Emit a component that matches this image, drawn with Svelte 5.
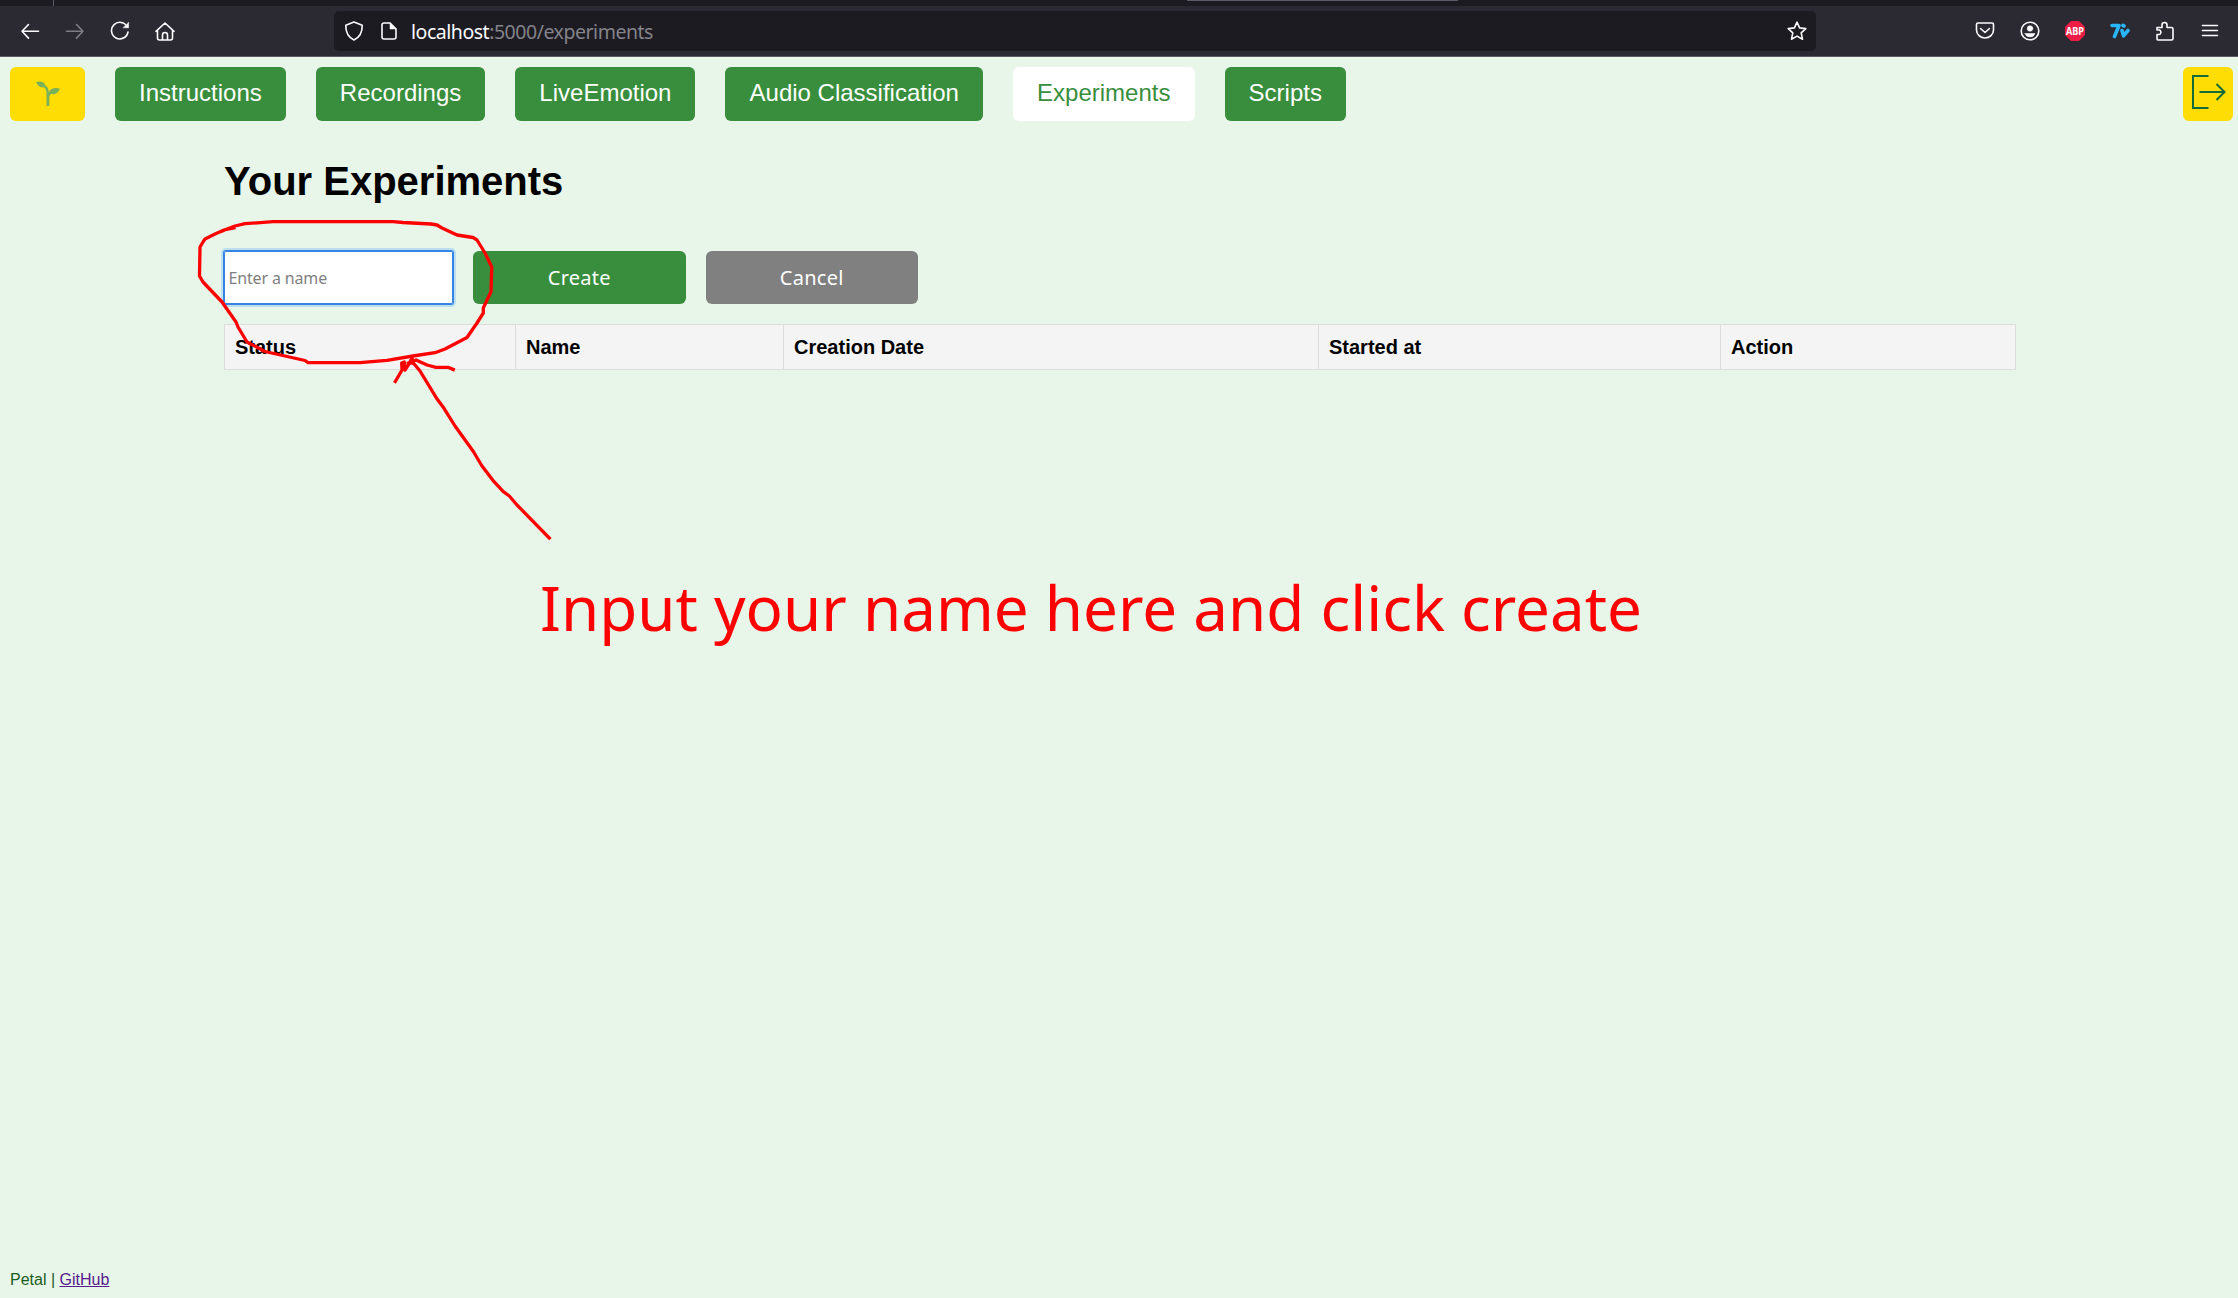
<script>
  const nav = ['Instructions', 'Recordings', 'LiveEmotion', 'Audio Classification', 'Experiments', 'Scripts'];
  const columns = ['Status', 'Name', 'Creation Date', 'Started at', 'Action'];
  let name = $state('');
</script>

<div class="window">
  <div class="tabs"><span class="divider"></span><span class="active-tab"></span></div>

  <div class="toolbar">
    <div class="controls">
      <svg viewBox="0 0 20 20"><path d="M18.500 10.300H2M8.500 3.500L2 10.300l6.500 6.800" /></svg>
      <svg class="dim" viewBox="0 0 20 20"><path d="M1.500 10.300H18M11.500 3.500l6.500 6.800-6.500 6.800" /></svg>
      <svg viewBox="0 0 20 20"><path d="M17.3 6A8.3 8.3 0 1 0 18 11" /><path class="solid" d="M18.600 1.500v5.300h-5.300z" /></svg>
      <svg viewBox="0 0 20 20"><path d="M1 10.300l9-8.300L19 10.300M2.500 9V17q0 2 2 2h11q2 0 2-2V9M7.500 19v-5q0-2.500 2.500-2.500t2.500 2.500V19" /></svg>
    </div>
    <div class="url">
      <svg viewBox="0 0 20 20"><path d="M10 1l8.200 3.200c.2 6-1.200 11.300-8.200 14.800C3 15.500 1.600 10.200 1.800 4.200z" /></svg>
      <svg class="page-icon" viewBox="0 0 20 20"><path d="M11 2H5Q3 2 3 4v12q0 2 2 2h10q2 0 2-2V8z" /><path class="solid" d="M11 2v6h6z" /></svg>
      <span class="address">localhost<i>:5000/experiments</i></span>
      <svg class="star" viewBox="0 0 20 20"><path d="M10 1.200l2.600 5.700 6.200.7-4.600 4.200 1.300 6.400-5.500-3.100-5.500 3.100 1.300-6.400-4.600-4.200 6.200-.7z" /></svg>
    </div>
    <div class="extensions">
      <svg viewBox="0 0 20 20"><path d="M3 2h14q1.500 0 1.500 1.500V9a8.500 8 0 0 1-17 0V3.500Q1.500 2 3 2zM5.500 7.500L10 11.500l4.500-4" /></svg>
      <svg viewBox="0 0 20 20"><circle cx="10" cy="10" r="8.800" /><circle class="solid" cx="10" cy="7.500" r="2.800" /><path class="solid" d="M5 12.500h10q-1 3.500-5 3.500t-5-3.500z" /></svg>
      <svg class="abp" viewBox="0 0 20 20"><path d="M6 0h8l6 6v8l-6 6H6l-6-6V6z" /><text x="10" y="13.800" text-anchor="middle" textLength="18" lengthAdjust="spacingAndGlyphs">ABP</text></svg>
      <svg class="seven" viewBox="0 0 20 20"><path d="M2 4.500h7L4.500 15.500M12 9.500l1.500 5.300 4.500-5.300M13 4.300l1 .7" /></svg>
      <svg viewBox="0 0 20 20"><path d="M2 18V13.500h2.500a2.500 2.500 0 0 0 0-4.500H2V6.500H7V4a2.500 2.500 0 0 1 5 0v2.500h4.500q1.500 0 1.500 1.500v9.500q0 1.500-1.500 1.500H3q-1 0-1-1z" /></svg>
      <svg class="menu" viewBox="0 0 20 20"><path d="M2.500 4.500h15M2.500 9.500h15M2.500 14.500h15" /></svg>
    </div>
  </div>

  <nav>
    <a class="logo" href="#home" aria-label="Home">
      <svg viewBox="0 0 24 25"><path d="M10.500 25V13.500C10.500 9 9.500 7 7.500 6.300 4 7 2 4.500 0 1.200 4 0 8 0 9.300 4.500 11.500 6 12.500 7 13 11.500 14 7.500 18 6 24 7.500 22 12 19.500 14 15.500 12.800 13.500 14 13.300 15.500 13.300 17v8z" /></svg>
    </a>
    {#each nav as item}
      <a class="item" class:current={item === 'Experiments'} href="#{item}">{item}</a>
    {/each}
    <a class="logout" href="#logout" aria-label="Log out">
      <svg viewBox="0 0 34 34"><path d="M16.500 1H1v32h15.500M7.500 17h25M24.500 9l8 8-8 8" /></svg>
    </a>
  </nav>

  <main>
    <h1>Your Experiments</h1>
    <form>
      <input placeholder="Enter a name" bind:value={name} />
      <button type="button">Create</button>
      <button type="button" class="cancel">Cancel</button>
    </form>
    <div class="table">
      {#each columns as column}<div>{column}</div>{/each}
    </div>
  </main>

  <footer>Petal | <a href="#github">GitHub</a></footer>

  <!-- Hand-drawn annotation laid over the page -->
  <svg class="note" viewBox="0 0 2238 1298">
    <path d="M234 228L224 230 215 234 205 239 203 242 200 247 199.500 276 203 282 222 302 236 322 238 327 247 342 265 351.500 305 360.500 308 362.700H360L387 360.300 413 356 435 352.700 445 349 467 337.500 477 323 483.300 313V308L491 291.700 491.700 267 485 253 477 240 473 237.500 457 235 442 228 437 225 431 224 403 222.500 393 221.700H273L245 223.700 235 226 222 231" />
    <path d="M549.300 538L517 505 509.300 496 503.300 491.700 494 481.700 482 466 473 451 455 426 444 408.300 437.300 399.300 420 371 413 362.500" />
    <path d="M395.300 381.500L402 370 401.700 363 404.300 362 405 370 409.300 363.300 412 358 413 363 408 363 416 360 427 365 436 367.300H448L453.300 369.500" />
    <text x="540" y="631" textLength="1102" lengthAdjust="spacingAndGlyphs">Input your name here and click create</text>
  </svg>
</div>

<style>
  :global(body) { margin: 0; }
  * { box-sizing: border-box; }
  .window { position: relative; width: 2238px; height: 1298px; display: flex; flex-direction: column; overflow: hidden; background: #e8f5e9; font-family: "Liberation Sans", Arial, sans-serif; }
  .tabs { height: 6px; flex: none; display: flex; background: #1c1b22; }
  .divider { width: 1px; margin-left: 53px; background: #5b5b66; }
  .active-tab { width: 271px; height: 1px; margin-left: 1133px; background: #5b5b66; }
  .toolbar { height: 51px; flex: none; display: flex; align-items: center; padding: 0 18px 0 20px; background: #2b2a33; border-bottom: 1px solid #5b5b66; }
  .toolbar svg { width: 20px; height: 20px; flex: none; fill: none; stroke: #fbfbfe; stroke-width: 1.6; stroke-linecap: round; stroke-linejoin: round; }
  .toolbar .solid { fill: #fbfbfe; stroke-width: .5; }
  .toolbar .dim { stroke: #7d7c84; }
  .controls { width: 314px; display: flex; gap: 25px; }
  .url { width: 1482px; height: 40px; display: flex; align-items: center; padding: 0 9px 0 10px; border-radius: 5px; background: #1c1b22; }
  .url .page-icon { margin-left: 15px; }
  .address { margin: 0 0 0 12px; color: #fbfbfe; font: 19.500px "Noto Sans", sans-serif; letter-spacing: -.47px; }
  .address i { color: #84838a; font-style: normal; }
  .url .star { margin-left: auto; }
  .extensions { margin-left: auto; display: flex; gap: 25px; }
  .toolbar .abp { fill: #ed1e45; stroke: none; }
  .abp text { fill: #fff; font: bold 10px "Noto Sans", sans-serif; }
  .toolbar .seven { stroke: #29b6f6; stroke-width: 3.600; }
  nav { display: flex; gap: 30px; padding: 10px 5px 0 10px; }
  nav a { height: 54px; border-radius: 6px; text-decoration: none; }
  .logo { width: 75px; display: flex; justify-content: center; padding-top: 14px; background: #fddd04; }
  .logo svg { width: 24px; height: 25px; fill: #78b159; }
  .item { padding: 0 24.050px; line-height: 52px; background: #388e3c; color: #fff; font-size: 24px; }
  .item.current { background: #fff; color: #388e3c; }
  .logout { width: 50px; margin-left: auto; padding: 8px 0 0 9px; background: #fddd04; }
  .logout svg { width: 34px; height: 34px; fill: none; stroke: #146b3a; stroke-width: 2; }
  main { width: 1792px; margin: 33px 0 0 224px; }
  h1 { margin: 0; height: 97px; font-size: 40px; line-height: 54px; }
  form { display: flex; gap: 20px; }
  input { width: 229px; height: 53px; border: 0; border-radius: 2px; padding: 1px 5px 0 4.500px; outline: 0; background: #fff; box-shadow: 0 0 0 1px #3584e4, inset 0 0 0 1px #3584e4, 0 0 0 3px #bcdff0; font: 16px "Noto Sans", sans-serif; letter-spacing: -.15px; }
  input::placeholder { color: #7f7f7f; }
  button { width: 212.500px; height: 53px; border: 0; border-radius: 6px; padding: 0; background: #388e3c; color: #fff; font: 20px "Noto Sans", sans-serif; letter-spacing: .25px; }
  .cancel { background: #808080; }
  .table { display: grid; grid-template-columns: 291px 268px 535px 402px 295px; height: 46px; margin-top: 20px; border: 1px solid #ddd; border-right: 0; background: #f4f4f4; font-size: 20px; font-weight: bold; line-height: 44px; }
  .table div { padding-left: 10px; border-right: 1px solid #ddd; }
  footer { margin: auto 0 9px 10px; color: #1b5e20; font-size: 16px; line-height: 18px; }
  footer a { color: #551a8b; }
  .note { position: absolute; inset: 0; width: 2238px; height: 1298px; pointer-events: none; }
  .note path { fill: none; stroke: #f00; stroke-width: 3.300; stroke-linejoin: round; stroke-linecap: square; }
  .note text { fill: #f00; font: 62px "Noto Sans", sans-serif; }
</style>
